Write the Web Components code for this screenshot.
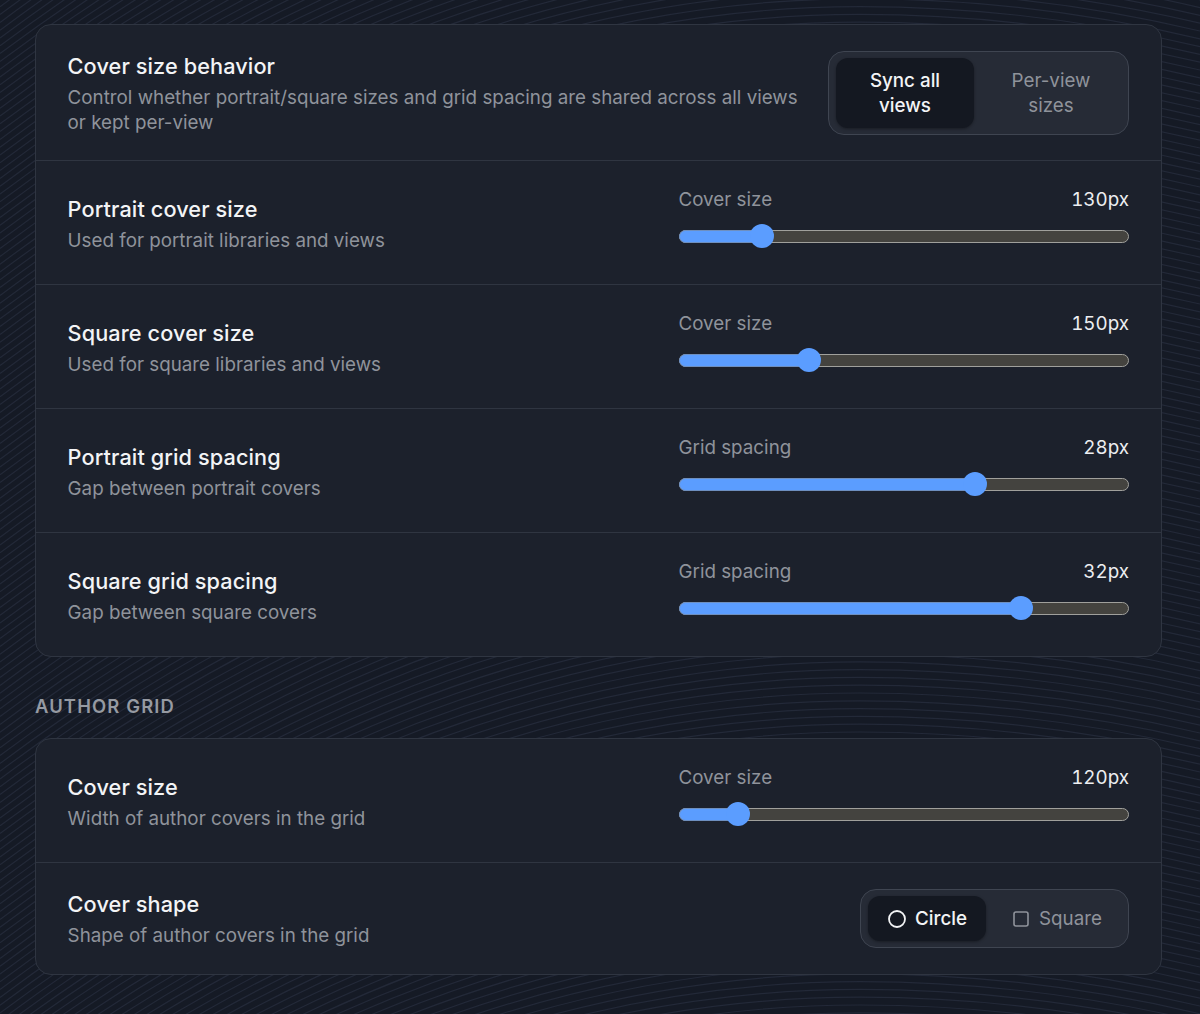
<!DOCTYPE html>
<html lang="en"><head><meta charset="utf-8"><title>Cover settings</title>
<style>
html,body{margin:0;padding:0;background:#151a25}
body{font-family:Inter,"Liberation Sans",sans-serif}
</style></head><body>
<app-page>
  <settings-card>
    <setting-row title="Cover size behavior" desc="Control whether portrait/square sizes and grid spacing are shared across all views or kept per-view" pad="25.5" tpad="1">
      <seg-toggle style="--w:301px;--py:6px;--px:7px">
        <seg-option active style="--bw:138px;--bh:70px">Sync all<br>views</seg-option>
        <seg-option style="--bw:142px;--bh:70px">Per-view<br>sizes</seg-option>
      </seg-toggle>
    </setting-row>
    <setting-row title="Portrait cover size" desc="Used for portrait libraries and views"><slider-control label="Cover size" value="130px" pos="16.7"></slider-control></setting-row>
    <setting-row title="Square cover size" desc="Used for square libraries and views"><slider-control label="Cover size" value="150px" pos="27.7"></slider-control></setting-row>
    <setting-row title="Portrait grid spacing" desc="Gap between portrait covers"><slider-control label="Grid spacing" value="28px" pos="66.6"></slider-control></setting-row>
    <setting-row title="Square grid spacing" desc="Gap between square covers" last><slider-control label="Grid spacing" value="32px" pos="77.5"></slider-control></setting-row>
  </settings-card>
  <section-label>AUTHOR GRID</section-label>
  <settings-card>
    <setting-row title="Cover size" desc="Width of author covers in the grid"><slider-control label="Cover size" value="120px" pos="11"></slider-control></setting-row>
    <setting-row title="Cover shape" desc="Shape of author covers in the grid" pad="26" tpad="1" last>
      <seg-toggle style="--w:269px;--py:6px;--px:7px">
        <seg-option active icon="circle" style="--bw:118px;--bh:45px">Circle</seg-option>
        <seg-option icon="square" style="--bw:129px;--bh:45px">Square</seg-option>
      </seg-toggle>
    </setting-row>
  </settings-card>
</app-page>
<script>
function shadow(el, html){ el.attachShadow({mode:'open'}).innerHTML = html; return el.shadowRoot; }
function bgPattern(){
  let d='';
  for(let y=-360;y<1040;y+=7.8){
    d+=`M0 ${y+320}Q430 ${y} 860 ${y}Q1030 ${y} 1200 ${y+40}`;
  }
  const svg=`<svg xmlns="http://www.w3.org/2000/svg" width="1200" height="1014"><path d="${d}" fill="none" stroke="#232938" stroke-width="1.2"/></svg>`;
  return `url("data:image/svg+xml,${encodeURIComponent(svg)}")`;
}
customElements.define('app-page',class extends HTMLElement{constructor(){super();
  shadow(this,`<style>:host{display:flex;flex-direction:column;box-sizing:border-box;width:1200px;height:1014px;padding:24px 38px 0 35px;background-color:#151a25;overflow:hidden}</style><slot></slot>`);
  this.style.backgroundImage=bgPattern();
}});
customElements.define('settings-card',class extends HTMLElement{constructor(){super();
  shadow(this,`<style>:host{display:flex;flex-direction:column;background:#1c212c;border:1px solid #2f3541;border-radius:16px;overflow:hidden}</style><slot></slot>`);
}});
customElements.define('section-label',class extends HTMLElement{constructor(){super();
  shadow(this,`<style>:host{display:block;margin:37px 0 20px;height:24px;line-height:24px;font-size:18.4px;font-weight:600;letter-spacing:1.15px;color:#969aa2}</style><slot></slot>`);
}});
customElements.define('setting-row',class extends HTMLElement{constructor(){super();
  const pad=this.getAttribute('pad')||'24';
  const tpad=this.getAttribute('tpad')||'3';
  const last=this.hasAttribute('last');
  shadow(this,`<style>
  :host{display:flex;align-items:center;justify-content:space-between;gap:24px;padding:${pad}px 32px;border-bottom:${last?'0':'1px solid #2f3541'}}
  .t{flex:1;min-width:0;padding-top:${tpad}px;margin-left:-.4px}
  .h{font-size:21.7px;font-weight:500;letter-spacing:.1px;line-height:28px;color:#f3f4f6}
  .d{font-size:18.8px;line-height:25px;color:#8f939b;margin-top:5px}
  ::slotted(*){flex:none}
  </style><div class="t"><div class="h"></div><div class="d"></div></div><slot></slot>`);
  this.shadowRoot.querySelector('.h').textContent=this.getAttribute('title');
  this.shadowRoot.querySelector('.d').textContent=this.getAttribute('desc');
  this.removeAttribute('title');
}});
customElements.define('slider-control',class extends HTMLElement{constructor(){super();
  const p=+this.getAttribute('pos');
  shadow(this,`<style>
  :host{display:block;width:450px;height:75px}
  .top{display:flex;justify-content:space-between;margin-top:1px;line-height:28px;height:28px;font-size:18.8px;color:#8f939b}
  .l{margin-left:-.5px}
  .v{color:#eceef1;font-variant-numeric:tabular-nums;font-feature-settings:"tnum"}
  .track{margin-top:10px;position:relative;height:24px}
  .rail{position:absolute;left:0;right:0;top:6px;height:13px;box-sizing:border-box;border-radius:7px;background:#44433f;border:1.5px solid #a0a09c}
  .fill{position:absolute;left:0;top:6px;height:13px;border-radius:7px;background:#5b9dff;border:1.5px solid #6e8fbf;box-sizing:border-box}
  .thumb{position:absolute;top:0;width:24px;height:24px;border-radius:50%;background:#5b9dff}
  </style><div class="top"><span class="l"></span><span class="v"></span></div>
  <div class="track"><div class="rail"></div><div class="fill" style="width:calc(12px + (100% - 24px)*${p/100})"></div><div class="thumb" style="left:calc((100% - 24px)*${p/100})"></div></div>`);
  this.shadowRoot.querySelector('.l').textContent=this.getAttribute('label');
  this.shadowRoot.querySelector('.v').textContent=this.getAttribute('value');
}});
customElements.define('seg-toggle',class extends HTMLElement{constructor(){super();
  shadow(this,`<style>:host{display:flex;box-sizing:border-box;width:var(--w);padding:var(--py) var(--px);gap:6px;background:#262b36;border:1px solid #3f4551;border-radius:16px}</style><slot></slot>`);
}});
customElements.define('seg-option',class extends HTMLElement{constructor(){super();
  const a=this.hasAttribute('active'),ic=this.getAttribute('icon');
  const svg=ic==='circle'?`<svg width="20" height="20" viewBox="0 0 20 20" fill="none" stroke="currentColor" stroke-width="1.8"><circle cx="10" cy="10" r="8"/></svg>`:
    ic==='square'?`<svg width="20" height="20" viewBox="0 0 20 20" fill="none" stroke="currentColor" stroke-width="1.6"><rect x="3" y="3" width="14" height="14" rx="2"/></svg>`:'';
  shadow(this,`<style>:host{display:flex;align-items:center;justify-content:center;gap:8px;box-sizing:border-box;width:var(--bw);height:var(--bh);flex:none;border-radius:12px;text-align:center;font-size:18.8px;line-height:25px;font-weight:${a?500:400};color:${a?'#f3f4f6':'#8f939b'};background:${a?'#141821':'transparent'};${a?'box-shadow:0 1px 3px rgba(0,0,0,.35);':''}}
  svg{flex:none;display:block}</style>${svg}<span><slot></slot></span>`);
}});
</script>
</body></html>
